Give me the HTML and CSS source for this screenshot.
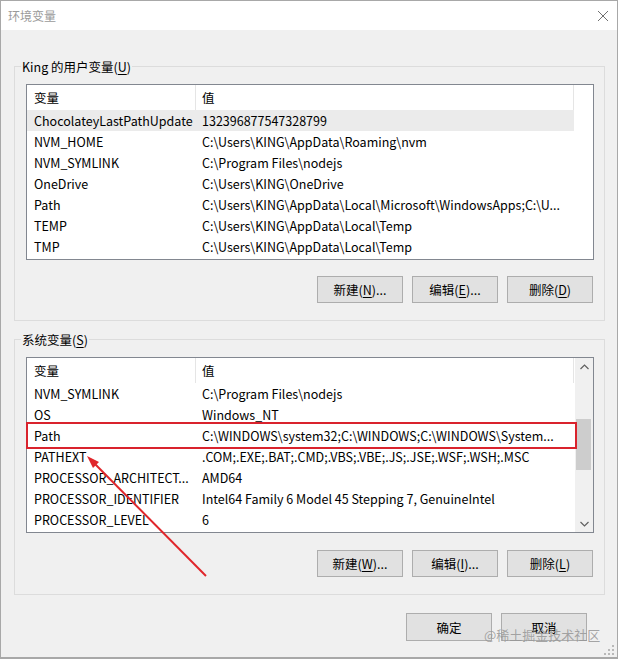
FILE: index.html
```html
<!DOCTYPE html>
<html lang="zh-CN">
<head>
<meta charset="utf-8">
<title>环境变量</title>
<link rel="stylesheet" href="styles.css">
</head>
<body>
<div class="window">
  <div class="titlebar">
    <span class="title">环境变量</span>
    <svg class="close" width="12" height="12" viewBox="0 0 12 12"><path d="M1 1L11 11M11 1L1 11" stroke="#707070" stroke-width="1" fill="none"/></svg>
  </div>
  <div class="body">
    <fieldset class="group">
      <legend>King 的用户变量(<u>U</u>)</legend>
      <div class="listview">
        <div class="lv-main">
          <div class="lv-header"><div class="hcell">变量</div><div class="hcell">值</div></div>
          <div class="row selected"><div class="cell">ChocolateyLastPathUpdate</div><div class="cell">132396877547328799</div></div>
          <div class="row"><div class="cell">NVM_HOME</div><div class="cell">C:\Users\KING\AppData\Roaming\nvm</div></div>
          <div class="row"><div class="cell">NVM_SYMLINK</div><div class="cell">C:\Program Files\nodejs</div></div>
          <div class="row"><div class="cell">OneDrive</div><div class="cell">C:\Users\KING\OneDrive</div></div>
          <div class="row"><div class="cell">Path</div><div class="cell">C:\Users\KING\AppData\Local\Microsoft\WindowsApps;C:\U...</div></div>
          <div class="row"><div class="cell">TEMP</div><div class="cell">C:\Users\KING\AppData\Local\Temp</div></div>
          <div class="row"><div class="cell">TMP</div><div class="cell">C:\Users\KING\AppData\Local\Temp</div></div>
        </div>
      </div>
      <div class="btnrow">
        <button class="btn">新建(<u>N</u>)...</button>
        <button class="btn">编辑(<u>E</u>)...</button>
        <button class="btn">删除(<u>D</u>)</button>
      </div>
    </fieldset>
    <fieldset class="group group-sys">
      <legend>系统变量(<u>S</u>)</legend>
      <div class="listview">
        <div class="lv-main">
          <div class="lv-header"><div class="hcell">变量</div><div class="hcell">值</div></div>
          <div class="row"><div class="cell">NVM_SYMLINK</div><div class="cell">C:\Program Files\nodejs</div></div>
          <div class="row"><div class="cell">OS</div><div class="cell">Windows_NT</div></div>
          <div class="row"><div class="cell">Path</div><div class="cell">C:\WINDOWS\system32;C:\WINDOWS;C:\WINDOWS\System...</div></div>
          <div class="row"><div class="cell">PATHEXT</div><div class="cell">.COM;.EXE;.BAT;.CMD;.VBS;.VBE;.JS;.JSE;.WSF;.WSH;.MSC</div></div>
          <div class="row"><div class="cell">PROCESSOR_ARCHITECT...</div><div class="cell">AMD64</div></div>
          <div class="row"><div class="cell">PROCESSOR_IDENTIFIER</div><div class="cell">Intel64 Family 6 Model 45 Stepping 7, GenuineIntel</div></div>
          <div class="row"><div class="cell">PROCESSOR_LEVEL</div><div class="cell">6</div></div>
        </div>
        <div class="scrollbar">
          <div class="sb-btn"><svg width="9" height="6" viewBox="0 0 9 6"><path d="M0.5 5L4.5 1L8.5 5" stroke="#606060" stroke-width="1.2" fill="none"/></svg></div>
          <div class="sb-track"><div class="sb-thumb"></div></div>
          <div class="sb-btn"><svg width="9" height="6" viewBox="0 0 9 6"><path d="M0.5 1L4.5 5L8.5 1" stroke="#606060" stroke-width="1.2" fill="none"/></svg></div>
        </div>
      </div>
      <div class="btnrow">
        <button class="btn">新建(<u>W</u>)...</button>
        <button class="btn">编辑(<u>I</u>)...</button>
        <button class="btn">删除(<u>L</u>)</button>
      </div>
    </fieldset>
    <div class="footer">
      <button class="btn">确定</button>
      <button class="btn">取消</button>
    </div>
  </div>
  <div class="highlight"></div>
  <svg class="arrow" width="618" height="659" viewBox="0 0 618 659">
    <line x1="206" y1="576" x2="92" y2="461" stroke="#e0262b" stroke-width="2"/>
    <path d="M87 456L99 462L93 468Z" fill="#e0262b"/>
  </svg>
  <div class="watermark">@稀土掘金技术社区</div>
  <svg class="grip" width="12" height="12" viewBox="0 0 12 12">
    <rect x="9" y="1" width="2" height="2" fill="#b8b8b8"/>
    <rect x="5" y="5" width="2" height="2" fill="#b8b8b8"/>
    <rect x="9" y="5" width="2" height="2" fill="#b8b8b8"/>
    <rect x="1" y="9" width="2" height="2" fill="#b8b8b8"/>
    <rect x="5" y="9" width="2" height="2" fill="#b8b8b8"/>
    <rect x="9" y="9" width="2" height="2" fill="#b8b8b8"/>
  </svg>
</div>
</body>
</html>
```
FILE: styles.css
```css
* { box-sizing: border-box; }
html, body { margin: 0; padding: 0; background: #ffffff; }
body {
  font-family: "Noto Sans CJK SC", "Noto Sans", sans-serif;
  font-size: 12.5px;
  color: #000;
}
.window {
  position: relative;
  width: 618px;
  height: 659px;
  border: 1px solid #a8a8a8;
  border-bottom-width: 2px;
  background: #f0f0f0;
  display: flex;
  flex-direction: column;
  overflow: hidden;
}
.titlebar {
  height: 29px;
  background: #fff;
  display: flex;
  align-items: center;
  justify-content: space-between;
  padding: 0 8px 0 7px;
  flex-shrink: 0;
}
.title {
  font-size: 12px;
  color: #9a9a9a;
  line-height: 16px;
}
.close { display: block; margin-top: 1px; }
.body {
  flex: 1;
  display: flex;
  flex-direction: column;
  padding: 0 12px 0 13px;
}
.group {
  margin: 28px 0 0 0;
  border: 1px solid #dcdcdc;
  padding: 9px 10px 17px 11px;
  min-width: 0;
}
.group-sys { margin-top: 10px; }
.group legend {
  margin-left: -5px;
  padding: 0 1px;
  line-height: 17px;
  font-size: 12.5px;
}
u { text-decoration-thickness: 1px; text-underline-offset: 2px; }
.listview {
  height: 176px;
  border: 1px solid #828790;
  background: #fff;
  display: flex;
  overflow: hidden;
}
.lv-main { flex: 1; min-width: 0; }
.lv-header {
  height: 25px;
  display: grid;
  grid-template-columns: 169px 378px;
}
.hcell {
  line-height: 25px;
  padding-left: 7px;
  border-right: 1px solid #e5e5e5;
}
.hcell + .hcell { padding-left: 6px; }
.row {
  width: 547px;
  height: 21px;
  display: grid;
  grid-template-columns: 169px 378px;
}
.row.selected { background: #ebebeb; }
.cell {
  line-height: 21px;
  padding-left: 7px;
  white-space: nowrap;
  overflow: hidden;
}
.cell + .cell { padding-left: 6px; }
.scrollbar {
  width: 18px;
  background: #f0f0f0;
  display: flex;
  flex-direction: column;
  flex-shrink: 0;
}
.sb-btn {
  height: 17px;
  display: flex;
  align-items: center;
  justify-content: center;
}
.sb-track { flex: 1; padding-top: 44px; }
.sb-thumb {
  width: 15px;
  height: 51px;
  margin-left: 1px;
  background: #cdcdcd;
}
.btnrow {
  display: flex;
  justify-content: flex-end;
  gap: 9px;
  margin-top: 16px;
  padding-right: 1px;
}
.group-sys .btnrow { margin-top: 17px; }
.btn {
  width: 86px;
  height: 27px;
  border: 1px solid #adadad;
  background: #e1e1e1;
  font-family: inherit;
  font-size: 12.5px;
  color: #000;
  padding: 0;
  line-height: 25px;
}
.footer {
  display: flex;
  justify-content: flex-end;
  gap: 9px;
  margin-top: 18px;
  padding-right: 18px;
}
.footer .btn { height: 28px; }
.highlight {
  position: absolute;
  left: 25px;
  top: 421px;
  width: 551px;
  height: 27px;
  border: 2px solid #d9232d;
}
.arrow { position: absolute; left: -1px; top: -1px; pointer-events: none; }
.watermark {
  position: absolute;
  left: 483px;
  top: 625px;
  font-size: 13px;
  line-height: 18px;
  color: rgba(150, 150, 150, 0.85);
}
.grip { position: absolute; right: 2px; bottom: 1px; }
```
